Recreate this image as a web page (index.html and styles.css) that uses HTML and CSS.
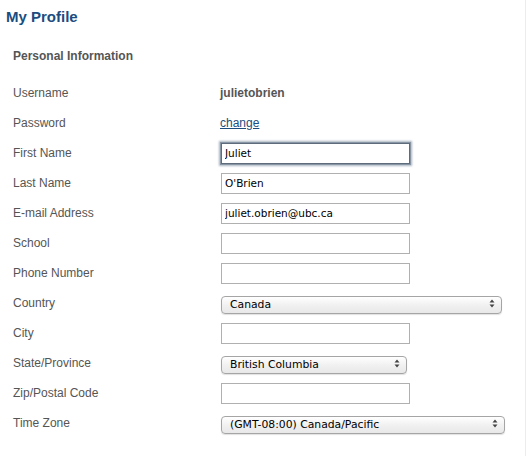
FILE: index.html
```
<!DOCTYPE html>
<html>
<head>
<meta charset="utf-8">
<link rel="stylesheet" href="styles.css">
</head>
<body>
<div class="page">
  <h1 class="title">My Profile</h1>
  <h2 class="section">Personal Information</h2>
  <div class="form">
    <div class="label">Username</div><div class="value"><span class="username">julietobrien</span></div>
    <div class="label">Password</div><div class="value"><a class="link" href="#">change</a></div>
    <div class="label">First Name</div><div class="value"><input class="field focused" type="text" value="Juliet"></div>
    <div class="label">Last Name</div><div class="value"><input class="field" type="text" value="O'Brien"></div>
    <div class="label">E-mail Address</div><div class="value"><input class="field" type="text" value="juliet.obrien@ubc.ca"></div>
    <div class="label">School</div><div class="value"><input class="field" type="text" value=""></div>
    <div class="label">Phone Number</div><div class="value"><input class="field" type="text" value=""></div>
    <div class="label">Country</div><div class="value"><span class="sel sel-country"><select><option>Canada</option></select><svg class="arrows" width="6" height="9" viewBox="0 0 6 9"><path d="M3 0.5 L5.5 3.5 L0.5 3.5 Z M3 8.5 L5.5 5.5 L0.5 5.5 Z" fill="#444"/></svg></span></div>
    <div class="label">City</div><div class="value"><input class="field" type="text" value=""></div>
    <div class="label">State/Province</div><div class="value"><span class="sel sel-state"><select><option>British Columbia</option></select><svg class="arrows" width="6" height="9" viewBox="0 0 6 9"><path d="M3 0.5 L5.5 3.5 L0.5 3.5 Z M3 8.5 L5.5 5.5 L0.5 5.5 Z" fill="#444"/></svg></span></div>
    <div class="label">Zip/Postal Code</div><div class="value"><input class="field" type="text" value=""></div>
    <div class="label">Time Zone</div><div class="value"><span class="sel sel-tz"><select><option>(GMT-08:00) Canada/Pacific</option></select><svg class="arrows" width="6" height="9" viewBox="0 0 6 9"><path d="M3 0.5 L5.5 3.5 L0.5 3.5 Z M3 8.5 L5.5 5.5 L0.5 5.5 Z" fill="#444"/></svg></span></div>
  </div>
</div>
</body>
</html>
```
FILE: styles.css
```
html, body {
  margin: 0;
  padding: 0;
  background: #fff;
}
.page {
  width: 526px;
  min-height: 456px;
  border-right: 1px solid #ececec;
  box-sizing: border-box;
  font-family: "Liberation Sans", Arial, sans-serif;
  color: #555;
}
.title {
  margin: 0;
  padding: 7px 0 0 6px;
  font-size: 15px;
  line-height: 20px;
  font-weight: bold;
  color: #1b4d80;
}
.section {
  margin: 0;
  padding: 19px 0 0 13px;
  font-size: 12px;
  line-height: 20px;
  font-weight: bold;
  color: #555;
}
.form {
  display: grid;
  grid-template-columns: 207px 1fr;
  grid-auto-rows: 30px;
  padding: 12px 0 0 13px;
}
.label {
  font-size: 12px;
  line-height: 30px;
  color: #555;
}
.value {
  display: flex;
  align-items: center;
}
.username {
  font-size: 12px;
  font-weight: bold;
  color: #555;
}
.link {
  font-size: 12px;
  color: #1b4d80;
  text-decoration: underline;
}
.field {
  box-sizing: border-box;
  width: 189px;
  height: 21px;
  margin: 0 0 0 1px;
  padding: 0 3px;
  border: 1px solid #b0b0b0;
  border-radius: 0;
  font-family: "DejaVu Sans", sans-serif;
  font-size: 10.5px;
  color: #000;
  background: #fff;
  outline: none;
}
.field.focused {
  border: 1px solid #5d6b7a;
  box-shadow: 0 0 0 1px #8795a5, 0 0 2px 2px #a9b4c0;
}
.sel {
  position: relative;
  display: inline-block;
  margin-left: 1px;
  height: 18px;
}
.sel select {
  -webkit-appearance: none;
  appearance: none;
  box-sizing: border-box;
  width: 100%;
  height: 18px;
  margin: 0;
  padding: 0 20px 0 8px;
  border: 1px solid #a5a5a5;
  border-radius: 4px;
  background: linear-gradient(#ffffff, #f1f1f1 50%, #e8e8e8);
  font-family: "DejaVu Sans", sans-serif;
  font-size: 10.8px;
  line-height: 16px;
  color: #000;
  box-shadow: 0 1px 1px rgba(0,0,0,0.12);
}
.sel-country { width: 281px; }
.sel-state { width: 186px; }
.sel-tz { width: 284px; }
.arrows {
  position: absolute;
  right: 7px;
  top: 5px;
}
```
